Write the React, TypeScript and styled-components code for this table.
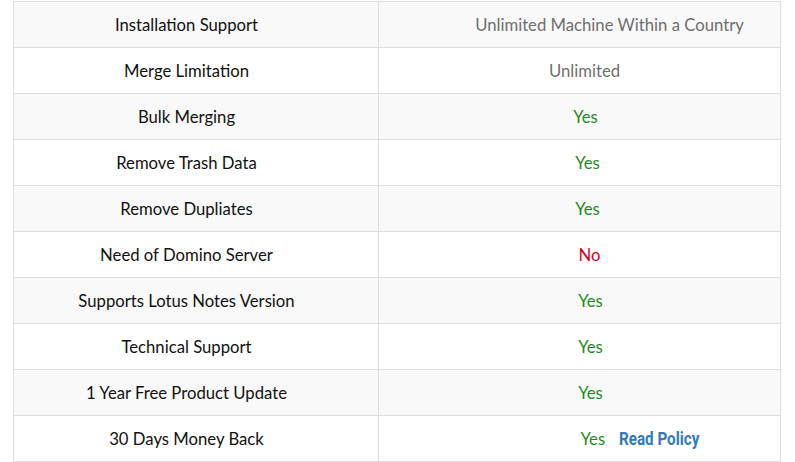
import React from "react";
import styled, { createGlobalStyle } from "styled-components";

const Global = createGlobalStyle`
  html, body { margin: 0; padding: 0; background: #fff; }
  body { font-family: Lato, "Open Sans", sans-serif; }
`;

const Wrap = styled.div`
  padding: 1px 0 0 13px;
`;

const Table = styled.table`
  width: 768px;
  border-collapse: collapse;
  table-layout: fixed;
  border: 1px solid #dddddd;
`;

const Row = styled.tr<{ $shade: boolean }>`
  height: 46px;
  background: ${(p) => (p.$shade ? "#f9f9f9" : "#ffffff")};
`;

const LabelCell = styled.td`
  width: 345px;
  border: 1px solid #dddddd;
  padding: 0 19px 0 0;
  text-align: center;
  vertical-align: middle;
  font-size: 16.7px;
  color: #111;
`;

const ValueCell = styled.td<{ $shift: number }>`
  border: 1px solid #dddddd;
  padding: 0 0 0 ${(p) => p.$shift * 2}px;
  text-align: center;
  vertical-align: middle;
  font-size: 16.7px;
`;

const Value = styled.span<{ $kind: "plain" | "yes" | "no" }>`
  color: ${(p) =>
    p.$kind === "yes" ? "#1f8a1f" : p.$kind === "no" ? "#d3001c" : "#6f6f6f"};
`;

const Policy = styled.a`
  display: inline-block;
  margin-left: 14px;
  margin-right: -19px;
  font-family: Roboto, "Liberation Sans", sans-serif;
  font-weight: 700;
  font-size: 19px;
  color: #337ab7;
  text-decoration: none;
  transform: scaleX(0.8);
  transform-origin: left center;
`;

type Item = {
  label: string;
  value: string;
  kind: "plain" | "yes" | "no";
  shift: number;
  policy?: boolean;
};

const rows: Item[] = [
  { label: "Installation Support", value: "Unlimited Machine Within a Country", kind: "plain", shift: 30 },
  { label: "Merge Limitation", value: "Unlimited", kind: "plain", shift: 5 },
  { label: "Bulk Merging", value: "Yes", kind: "yes", shift: 6 },
  { label: "Remove Trash Data", value: "Yes", kind: "yes", shift: 8 },
  { label: "Remove Dupliates", value: "Yes", kind: "yes", shift: 8 },
  { label: "Need of Domino Server", value: "No", kind: "no", shift: 10 },
  { label: "Supports Lotus Notes Version", value: "Yes", kind: "yes", shift: 11 },
  { label: "Technical Support", value: "Yes", kind: "yes", shift: 11 },
  { label: "1 Year Free Product Update", value: "Yes", kind: "yes", shift: 11 },
  { label: "30 Days Money Back", value: "Yes", kind: "yes", shift: 61, policy: true },
];

export default function App() {
  return (
    <>
      <Global />
      <Wrap>
        <Table>
          <tbody>
            {rows.map((r, i) => (
              <Row key={r.label} $shade={i % 2 === 0}>
                <LabelCell>{r.label}</LabelCell>
                <ValueCell $shift={r.shift}>
                  <Value $kind={r.kind}>{r.value}</Value>
                  {r.policy && <Policy href="#">Read Policy</Policy>}
                </ValueCell>
              </Row>
            ))}
          </tbody>
        </Table>
      </Wrap>
    </>
  );
}
